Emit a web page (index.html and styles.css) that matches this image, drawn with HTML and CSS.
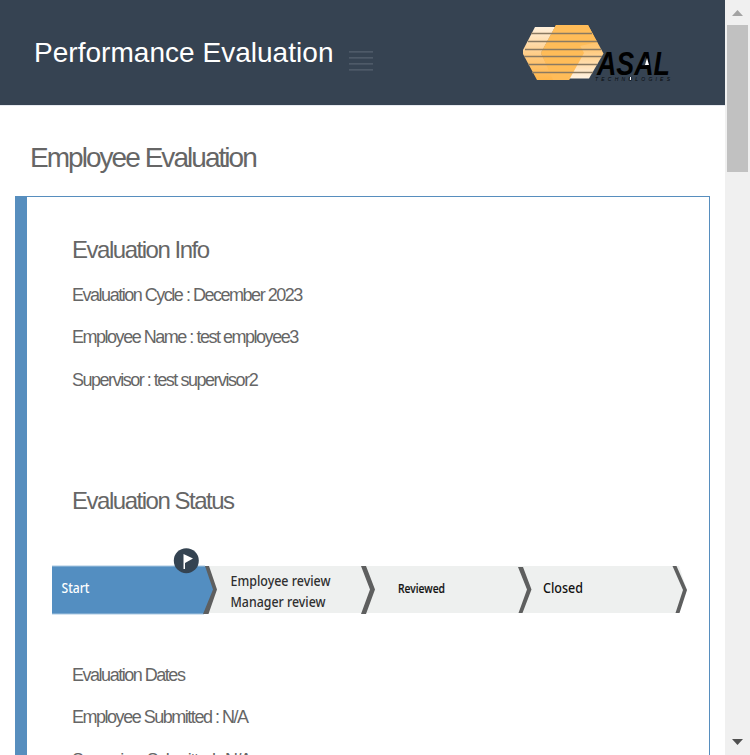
FILE: index.html
```html
<!DOCTYPE html>
<html lang="en">
<head>
<meta charset="utf-8">
<title>Performance Evaluation</title>
<link rel="stylesheet" href="styles.css">
</head>
<body>
<div class="window">
  <div class="page">
    <header class="header">
      <h1 class="brand">Performance Evaluation</h1>
      <div class="toggler"><i></i><i></i><i></i><i></i></div>
      <svg class="logo" width="152" height="62" viewBox="522 22 152 62">
        <defs>
          <linearGradient id="left" x1="0" y1="0" x2="0" y2="1"><stop offset="0" stop-color="#fff0dc"/><stop offset=".6" stop-color="#ffc779"/><stop offset="1" stop-color="#ffb64b"/></linearGradient>
          <linearGradient id="right" x1="0" y1="0" x2="0" y2="1"><stop offset="0" stop-color="#ffb84f"/><stop offset=".45" stop-color="#ffc878"/><stop offset="1" stop-color="#fff2e2"/></linearGradient>
        </defs>
        <path fill="url(#right)" d="M556 25h32l15.500 28.500L589 78.500h-33L541 53z"/>
        <path fill="url(#left)" d="M535 27h20L541 53l13 25h16l-1 2h-32L523 54v-4z"/>
        <path fill="#ffbc58" d="M556 25h32l9 17-17 4-9-17 13 24-15 27h-16L541 53z"/>
        <path stroke="#8a7a62" stroke-width="1.400" d="M531 33.500h61M528 41.500h69M525 49.500h76M524 56.500h78M528 64.500h69M532 72.500h61"/>
        <text class="logo-name" x="597" y="75" textLength="73" lengthAdjust="spacingAndGlyphs">ASAL</text>
        <path fill="#fff" d="m647 58 2 7h-4z"/>
        <text class="logo-sub" x="595" y="81" textLength="75">TECHNOLOGIES</text>
        <path stroke="#fff" d="M630.500 77v3"/>
      </svg>
    </header>
    <main class="main">
      <h2 class="title">Employee Evaluation</h2>
      <section class="panel">
        <h3 class="heading">Evaluation Info</h3>
        <p class="line">Evaluation Cycle : December 2023</p>
        <p class="line">Employee Name : test employee3</p>
        <p class="line">Supervisor : test supervisor2</p>
        <h3 class="heading status">Evaluation Status</h3>
        <svg class="steps" width="640" height="72" viewBox="50 545 640 72">
          <path fill="#eef0ef" d="M207 566h472l8 24-9 23H207z"/>
          <path fill="#538ec1" d="M52 566h154l9 24-10 24H52z"/>
          <path fill="none" stroke="#a8c7e1" d="M52 566h153M52 614h152"/>
          <g fill="#5e5f5f">
            <path d="M205 566h4l8 23.500-8.500 24.500h-5.500l10-24.500z"/>
            <path d="M361 566h5l9 23.500L366 614h-5l9-24.500z"/>
            <path d="M518 567h5l8.500 22.500-9 23.500h-4l8.500-23.500z"/>
            <path d="M672.500 566h4L687 590l-7.500 23h-4l7.500-23z"/>
          </g>
          <circle cx="186.300" cy="560.700" r="12.500" fill="#344351"/>
          <path fill="#fff" d="M183.500 554l9.500 4.500-8 4.500v6h-1.500z"/>
          <g class="step-text">
            <text class="on" x="61.500" y="593" textLength="28" lengthAdjust="spacingAndGlyphs">Start</text>
            <text x="230.500" y="585.500" textLength="100" lengthAdjust="spacingAndGlyphs">Employee review</text>
            <text x="230.500" y="607" textLength="95" lengthAdjust="spacingAndGlyphs">Manager review</text>
            <text class="small" x="398" y="593" textLength="47" lengthAdjust="spacingAndGlyphs">Reviewed</text>
            <text class="closed" x="543" y="593" textLength="40" lengthAdjust="spacingAndGlyphs">Closed</text>
          </g>
        </svg>
        <p class="line">Evaluation Dates</p>
        <p class="line">Employee Submitted : N/A</p>
        <p class="line">Supervisor Submitted : N/A</p>
      </section>
    </main>
  </div>
  <div class="scrollbar">
    <svg width="11" height="6" viewBox="0 0 11 6"><path fill="#a3a3a3" d="M5.500 0 11 6H0z"/></svg>
    <div class="thumb"></div>
    <svg class="down" width="11" height="6" viewBox="0 0 11 6"><path fill="#505050" d="M0 0h11L5.500 6z"/></svg>
  </div>
</div>
</body>
</html>
```
FILE: styles.css
```css
* { box-sizing: border-box; }
body { margin: 0; overflow: hidden; background: #fff; color: #666; font-family: "Liberation Sans", Arial, sans-serif; }
h1, h2, h3, p { margin: 0; font-weight: 400; }
.window { display: flex; height: 755px; overflow: hidden; }
.page { width: 725px; height: 755px; overflow: hidden; }
.header { display: flex; align-items: flex-start; height: 106px; padding: 22px 51px 0 34px; background: #364352; border-bottom: 1px solid #e7eaf0; }
.brand { width: 299px; margin-top: 15px; font-size: 28px; line-height: 32px; letter-spacing: .03px; color: #fff; white-space: nowrap; }
.toggler { display: flex; flex-direction: column; gap: 4px; width: 24px; margin: 29px 0 0 16px; }
.toggler i { height: 2px; background: #465261; border-top: 1px solid #4e5a68; }
.logo { display: block; margin-left: auto; overflow: visible; }
.logo-name { font: italic 700 33px "Liberation Sans", Arial, sans-serif; fill: #000; }
.logo-sub { font: italic 5px "Liberation Sans", Arial, sans-serif; fill: #080b10; }
.main { padding: 36px 15px 0; }
.title { height: 54px; padding-left: 15px; font-size: 28px; line-height: 32px; letter-spacing: -1.960px; }
.panel { height: 900px; padding: 36px 0 0 45px; border: 1px solid #578ebe; border-left-width: 12px; }
.heading { height: 47px; font-size: 24px; line-height: 34px; letter-spacing: -1.480px; }
.line { height: 42.400px; font-size: 18px; line-height: 30px; letter-spacing: -1.480px; white-space: nowrap; }
.status { margin-top: 76.800px; }
.steps { display: block; margin: 14px 0 43px -22px; }
.step-text { font: 500 14px "Noto Sans", "Open Sans", sans-serif; fill: #2f2f2f; }
.step-text .on { fill: #fff; }
.step-text .small { font-size: 13px; fill: #111; stroke: #111; stroke-width: .2px; }
.step-text .closed { fill: #111; }
.scrollbar { display: flex; flex-direction: column; align-items: center; width: 25px; padding: 10px 1px 10px 1px; background: #f0f0f0; }
.thumb { width: 21px; height: 147px; margin-top: 9px; background: #c1c1c1; }
.down { margin-top: auto; }
```
